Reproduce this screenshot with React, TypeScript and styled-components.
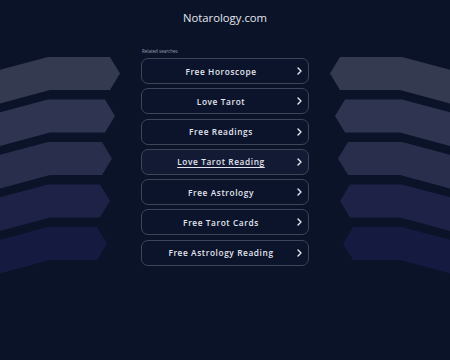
import React from "react";
import styled, { createGlobalStyle } from "styled-components";

const Global = createGlobalStyle`
  html, body { margin: 0; padding: 0; background: #0b1329; }
  body { font-family: "Open Sans", "Noto Sans", sans-serif; }
`;

const Page = styled.div`
  width: 450px;
  height: 360px;
  background: #0b1329;
  overflow: hidden;
  display: flex;
  flex-direction: column;
`;

const Title = styled.h1`
  margin: 0;
  padding-top: 9px;
  height: 46px;
  box-sizing: border-box;
  text-align: center;
  font-size: 11.3px;
  line-height: 17px;
  font-weight: 400;
  color: #e4e7ee;
`;

const Main = styled.div`
  display: grid;
  grid-template-columns: 141px 168px 141px;
`;

const Deco = styled.svg<{ $flip?: boolean }>`
  display: block;
  width: 141px;
  height: 240px;
  transform: ${(p) => (p.$flip ? "scaleX(-1)" : "none")};
`;

const Column = styled.div`
  display: flex;
  flex-direction: column;
`;

const Label = styled.div`
  font-size: 4.5px;
  line-height: 10px;
  height: 12px;
  color: #9aa1b2;
  padding-left: 1px;
`;

const List = styled.div`
  display: flex;
  flex-direction: column;
  gap: 4.3px;
`;

const Item = styled.a<{ $active?: boolean }>`
  position: relative;
  display: flex;
  align-items: center;
  justify-content: center;
  height: 26px;
  padding-right: 8px;
  box-sizing: border-box;
  border: 1.5px solid #3d4559;
  border-radius: 7px;
  background: ${(p) => (p.$active ? "#131b34" : "#0c142b")};
  color: #e3e6ee;
  font-size: 8.3px;
  font-weight: 600;
  letter-spacing: 0.6px;
  text-decoration: ${(p) => (p.$active ? "underline" : "none")};
  text-underline-offset: 1.5px;
  cursor: pointer;
`;

const Chevron = styled.svg`
  position: absolute;
  right: 6px;
  top: 50%;
  margin-top: -4px;
  width: 5px;
  height: 8px;
`;

const shapes = [
  { tip: 120, color: "#343b51" },
  { tip: 115, color: "#2f3550" },
  { tip: 112, color: "#282e4b" },
  { tip: 110, color: "#1d2246" },
  { tip: 107, color: "#141a40" },
];

function Decoration({ flip }: { flip?: boolean }) {
  return (
    <Deco $flip={flip} viewBox="0 46 141 240" preserveAspectRatio="none">
      {shapes.map((s, i) => {
        const t = 57 + 42.5 * i;
        const b = t + 33;
        const m = (t + b) / 2;
        const e = s.tip - 10;
        const pts = [
          [-20, t + 18],
          [48, t],
          [e, t],
          [s.tip, m],
          [e, b],
          [50, b],
          [-20, b + 19],
        ]
          .map((p) => p.join(","))
          .join(" ");
        return <polygon key={i} points={pts} fill={s.color} />;
      })}
    </Deco>
  );
}

const items = [
  "Free Horoscope",
  "Love Tarot",
  "Free Readings",
  "Love Tarot Reading",
  "Free Astrology",
  "Free Tarot Cards",
  "Free Astrology Reading",
];

export default function App() {
  return (
    <>
      <Global />
      <Page>
        <Title>Notarology.com</Title>
        <Main>
          <Decoration />
          <Column>
            <Label>Related searches</Label>
            <List>
              {items.map((t, i) => (
                <Item key={t} $active={i === 3}>
                  {t}
                  <Chevron viewBox="0 0 5 8">
                    <polyline
                      points="1,1 4,4 1,7"
                      fill="none"
                      stroke="#e8ebf2"
                      strokeWidth="1.4"
                      strokeLinecap="round"
                      strokeLinejoin="round"
                    />
                  </Chevron>
                </Item>
              ))}
            </List>
          </Column>
          <Decoration flip />
        </Main>
      </Page>
    </>
  );
}
